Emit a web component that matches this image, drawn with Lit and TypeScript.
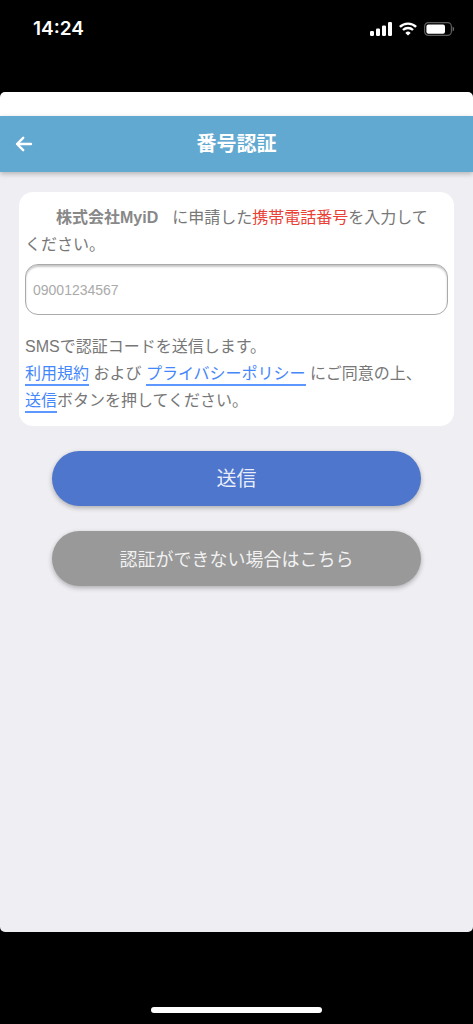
import { LitElement, html, css } from "lit";
import { customElement, state } from "lit/decorators.js";

@customElement("status-bar")
class StatusBar extends LitElement {
  static styles = css`
    :host {
      display: flex;
      justify-content: space-between;
      align-items: center;
      padding: 17px 18px 51px 33px;
      color: #fff;
    }
    .time {
      font: 600 19px/24px Inter, sans-serif;
    }
    .icons {
      display: flex;
      align-items: center;
      gap: 7px;
    }
    svg {
      display: block;
    }
  `;

  render() {
    return html`
      <span class="time">14:24</span>
      <div class="icons">
        <svg width="22" height="14" viewBox="0 0 22 14" fill="#fff" aria-hidden="true">
          <rect x="0" y="9" width="4" height="5" rx="1.2" />
          <rect x="6" y="6.4" width="4" height="7.6" rx="1.2" />
          <rect x="12" y="3.4" width="4" height="10.6" rx="1.2" />
          <rect x="18" y="0" width="4" height="14" rx="1.2" />
        </svg>
        <svg width="18" height="14" viewBox="0 0 18 14" fill="none" stroke="#fff" aria-hidden="true">
          <path d="M0.9 4.9A11.6 11.6 0 0 1 17.1 4.9" stroke-width="2.4" />
          <path d="M4 8A7.2 7.2 0 0 1 14 8" stroke-width="2.4" />
          <path d="M9 13.6L6.3 10.9A3.9 3.9 0 0 1 11.7 10.9Z" fill="#fff" stroke="none" />
        </svg>
        <svg width="31" height="14" viewBox="0 0 31 14" aria-hidden="true">
          <rect x="0.6" y="0.6" width="26.8" height="12.8" rx="3.8" fill="none" stroke="#5c5c5c" stroke-width="1.2" />
          <rect x="2.4" y="2.4" width="18.6" height="9.4" rx="2" fill="#fff" />
          <path d="M28.6 4.6A2.6 2.6 0 0 1 28.6 9.4Z" fill="#6a6a6a" />
        </svg>
      </div>
    `;
  }
}

@customElement("app-root")
class AppRoot extends LitElement {
  static styles = css`
    :host {
      display: flex;
      flex-direction: column;
      min-height: 100vh;
      background: #000;
      color: #777;
      font-family: "Liberation Sans", "Noto Sans CJK JP", sans-serif;
      font-size: 16px;
      line-height: 27px;
    }
    .view {
      flex: 1;
      display: flex;
      flex-direction: column;
      padding-top: 24px;
      border-radius: 5px;
      background: linear-gradient(#fff 24px, #efeef3 24px);
      overflow: hidden;
    }
    .bar {
      display: grid;
      grid-template-columns: 1fr auto 1fr;
      align-items: center;
      height: 56px;
      padding: 0 12px;
      background: #62a9d1;
      box-shadow: 0 2px 5px rgba(0, 0, 0, 0.25);
    }
    .title {
      margin: 0;
      color: #fff;
      font-size: 20px;
      font-weight: 700;
      line-height: 28px;
    }
    .back {
      justify-self: start;
      padding: 2px;
      border: 0;
      background: none;
    }
    .back svg {
      display: block;
    }
    form {
      display: flex;
      flex-direction: column;
      align-items: center;
      gap: 25px;
      padding: 20px 19px;
    }
    .card {
      align-self: stretch;
      padding: 12px 6px;
      border-radius: 14px;
      background: #fff;
    }
    .card label {
      display: block;
    }
    .company {
      margin: 0 14px 0 31px;
      font-weight: 700;
      color: #888;
    }
    .target {
      color: #ea4136;
    }
    .phone {
      display: block;
      box-sizing: border-box;
      width: 100%;
      height: 51px;
      margin: 6px 0 18px;
      padding: 0 7px;
      border: 1px solid #aaa;
      border-radius: 13px;
      background: #fff;
      box-shadow: inset 0 2px 2px rgba(0, 0, 0, 0.22);
      color: #555;
      font: 14px "Liberation Sans", sans-serif;
    }
    .phone::placeholder {
      color: #aaa;
      opacity: 1;
    }
    p {
      margin: 0;
    }
    a {
      padding-bottom: 2px;
      border-bottom: 2px solid #5c98ff;
      color: #4487fb;
      text-decoration: none;
    }
    .action {
      width: 85%;
      height: 55px;
      padding: 0 0 2px;
      border: 0;
      border-radius: 28px;
      background: #999;
      box-shadow: 0 2px 5px rgba(0, 0, 0, 0.28);
      color: rgba(255, 255, 255, 0.88);
      font: 18px "Noto Sans CJK JP", sans-serif;
    }
    .send {
      background: #4e76cd;
      font-size: 20px;
    }
    .home {
      display: flex;
      flex-direction: column;
      align-items: center;
      padding: 75px 0 11px;
    }
    .pill {
      width: 36%;
      height: 6px;
      border-radius: 3px;
      background: #fff;
    }
  `;

  @state() private phone = "";

  private onInput(e: Event) {
    this.phone = (e.target as HTMLInputElement).value;
  }

  render() {
    return html`
      <status-bar></status-bar>
      <main class="view">
        <header class="bar">
          <button class="back" type="button" aria-label="戻る">
            <svg width="20" height="20" viewBox="0 0 20 20" fill="none" stroke="#fff" stroke-width="2.4" stroke-linecap="round" stroke-linejoin="round">
              <path d="M9.2 3.8L3 10L9.2 16.2M3.2 10H17" />
            </svg>
          </button>
          <h1 class="title">番号認証</h1>
        </header>
        <form @submit=${(e: Event) => e.preventDefault()}>
          <section class="card">
            <label for="phone"><strong class="company">株式会社MyiD</strong>に申請した<span class="target">携帯電話番号</span>を入力して<br />ください。</label>
            <input id="phone" class="phone" type="tel" placeholder="09001234567" .value=${this.phone} @input=${this.onInput} />
            <p>SMSで認証コードを送信します。</p>
            <p><a href="#terms">利用規約</a> および <a href="#privacy">プライバシーポリシー</a> にご同意の上、<br /><a href="#send">送信</a>ボタンを押してください。</p>
          </section>
          <button class="action send" type="submit">送信</button>
          <button class="action" type="button">認証ができない場合はこちら</button>
        </form>
      </main>
      <footer class="home"><div class="pill"></div></footer>
    `;
  }
}
